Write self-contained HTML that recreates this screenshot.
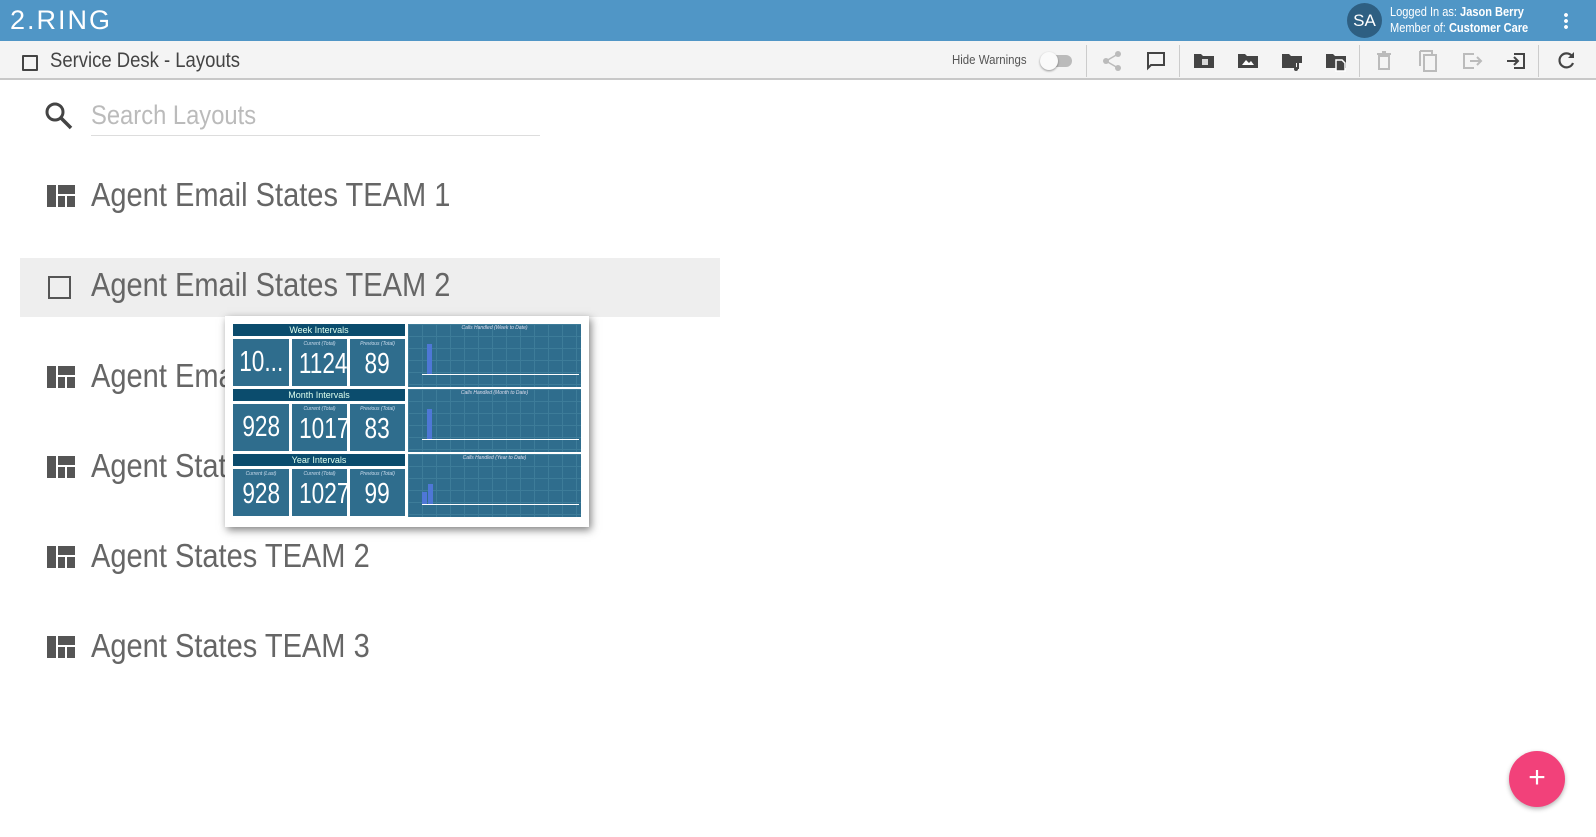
<!DOCTYPE html>
<html><head><meta charset="utf-8"><style>
*{margin:0;padding:0;box-sizing:border-box}
body{width:1596px;height:837px;overflow:hidden;background:#fff;font-family:"Liberation Sans",sans-serif;position:relative}
.n{display:inline-block;transform:scaleX(.88);transform-origin:0 0;white-space:nowrap}
.hdr{position:absolute;left:0;top:0;width:1596px;height:41px;background:#5096c6}
.logo{position:absolute;left:10px;top:5px;color:#fff;font-size:27px;letter-spacing:2px;font-weight:300}
.av{position:absolute;left:1347px;top:3px;width:35px;height:35px;border-radius:50%;background:#2e5f82;color:#fff;font-size:17px;text-align:center;line-height:35px}
.usr{position:absolute;left:1390px;top:4px;color:#fff;font-size:13px;line-height:16px}
.tb{position:absolute;left:0;top:41px;width:1596px;height:39px;background:#f4f4f4;border-bottom:2px solid #c8c8c8}
.abs{position:absolute}
.row{position:absolute;left:91px;font-size:33px;color:#666}
.ico{position:absolute;left:47px;width:28px;height:22px}
.pop{position:absolute;left:225px;top:316px;width:364px;height:211px;background:#fff;box-shadow:2px 3px 8px rgba(0,0,0,.5)}
.h{position:absolute;background:#0b4c6d;color:#dfe;font-size:9px;text-align:center;line-height:12px}
.t{position:absolute;background:#2f6d8d;color:#fff;text-align:center;font-size:29px;line-height:30px;overflow:hidden}
.t em{display:inline-block;transform:scaleX(.78);font-style:normal}
.t small{display:block;font-size:5px;line-height:10px;color:#cde;font-style:italic}
.c{position:absolute;background:#2f6d8d;left:183px;width:173px;height:63px;background-image:linear-gradient(#3d7c99 1px,transparent 1px),linear-gradient(90deg,#3d7c99 1px,transparent 1px);background-size:14px 12px}
.c span{position:absolute;top:1px;width:100%;text-align:center;font-size:5px;color:#dde;font-style:italic}
.c b{position:absolute;background:#4e77d6;width:5px}
.c i{position:absolute;left:14px;right:2px;bottom:12px;height:1px;background:#fff}
</style></head><body>
<div class="hdr"><div class="logo">2.RING</div>
<div class="av">SA</div>
<div class="usr"><span class="n" style="transform:scaleX(.85)">Logged In as: <b>Jason Berry</b><br>Member of: <b>Customer Care</b></span></div>
<div class="abs" style="left:1564px;top:12px;width:4px;height:18px;background:radial-gradient(circle,#fff 1.8px,transparent 2px) 0 0/4px 6px"></div>
</div>
<div class="tb">
<div class="abs" style="left:22px;top:14px;width:16px;height:16px;border:2px solid #444;border-radius:1px"></div>
<div class="abs" style="left:50px;top:8px;font-size:21px;color:#444"><span class="n">Service Desk - Layouts</span></div>
<div class="abs" style="left:952px;top:11px;font-size:13px;color:#555"><span class="n">Hide Warnings</span></div>
<div class="abs" style="left:1042px;top:14px;width:30px;height:12px;border-radius:6px;background:#bbb"></div>
<div class="abs" style="left:1040px;top:11px;width:18px;height:18px;border-radius:50%;background:#fafafa;box-shadow:0 1px 2px rgba(0,0,0,.4)"></div>
<div class="abs" style="left:1086px;top:4px;width:1px;height:32px;background:#ccc"></div>
<div class="abs" style="left:1179px;top:4px;width:1px;height:32px;background:#ccc"></div>
<div class="abs" style="left:1359px;top:4px;width:1px;height:32px;background:#ccc"></div>
<div class="abs" style="left:1538px;top:4px;width:1px;height:32px;background:#ccc"></div>
<svg class="abs" style="left:1100px;top:8px" width="24" height="24" viewBox="0 0 24 24" fill="#bbb"><circle cx="18" cy="5" r="3"/><circle cx="6" cy="12" r="3"/><circle cx="18" cy="19" r="3"/><path d="M6 12L18 5M6 12l12 7" stroke="#bbb" stroke-width="1.5"/></svg>
<svg class="abs" style="left:1144px;top:8px" width="24" height="24" viewBox="0 0 24 24"><path d="M4 4h16v12H7l-3 3z" fill="none" stroke="#444" stroke-width="2"/></svg>
<svg class="abs" style="left:1192px;top:8px" width="24" height="24" viewBox="0 0 24 24"><path d="M2 5h7l2 2h11v12H2z" fill="#444"/><path d="M10 10h6v6h-6z" fill="#fff" opacity=".8"/></svg>
<svg class="abs" style="left:1236px;top:8px" width="24" height="24" viewBox="0 0 24 24"><path d="M2 5h7l2 2h11v12H2z" fill="#444"/><path d="M6 16l4-5 3 3 2-2 3 4z" fill="#fff"/></svg>
<svg class="abs" style="left:1280px;top:8px" width="24" height="24" viewBox="0 0 24 24"><path d="M2 5h7l2 2h11v7h-6v5H2z" fill="#444"/><path d="M18 13v7" stroke="#444" stroke-width="2"/><circle cx="16" cy="20" r="2" fill="#444"/></svg>
<svg class="abs" style="left:1324px;top:8px" width="24" height="24" viewBox="0 0 24 24"><path d="M2 5h7l2 2h11v12H2z" fill="#444"/><path d="M12 11h6l3 3v8h-9z" fill="#444" stroke="#fff" stroke-width="1.5"/></svg>
<svg class="abs" style="left:1372px;top:8px" width="24" height="24" viewBox="0 0 24 24"><path d="M7 7h10v13H7zM5 5h14M10 3h4" fill="none" stroke="#bbb" stroke-width="2"/></svg>
<svg class="abs" style="left:1416px;top:8px" width="24" height="24" viewBox="0 0 24 24"><path d="M8 6h12v16H8zM4 2h12v3" fill="none" stroke="#bbb" stroke-width="2"/><path d="M4 2v15" stroke="#bbb" stroke-width="2"/></svg>
<svg class="abs" style="left:1460px;top:8px" width="24" height="24" viewBox="0 0 24 24"><path d="M14 5H4v14h10M10 12h11M17 8l4 4-4 4" fill="none" stroke="#bbb" stroke-width="2"/></svg>
<svg class="abs" style="left:1504px;top:8px" width="24" height="24" viewBox="0 0 24 24"><path d="M10 5h10v14H10M3 12h11M10 8l4 4-4 4" fill="none" stroke="#444" stroke-width="2"/></svg>
<svg class="abs" style="left:1554px;top:8px" width="24" height="24" viewBox="0 0 24 24"><path d="M18 7a7 7 0 1 0 1 7" fill="none" stroke="#444" stroke-width="2.2"/><path d="M20 3v6h-6z" fill="#444"/></svg>
</div>

<svg class="abs" style="left:43px;top:100px" width="32" height="32" viewBox="0 0 32 32"><circle cx="12" cy="12" r="8" fill="none" stroke="#444" stroke-width="3"/><path d="M18 18l10 10" stroke="#444" stroke-width="3.5"/></svg>
<div class="abs" style="left:91px;top:100px;font-size:27px;color:#bbb"><span class="n">Search Layouts</span></div>
<div class="abs" style="left:91px;top:135px;width:449px;height:1px;background:#ddd"></div>

<div class="abs" style="left:20px;top:258px;width:700px;height:59px;background:#eee"></div>
<div class="abs" style="left:48px;top:276px;width:23px;height:23px;border:2px solid #555"></div>

<svg width="0" height="0" style="position:absolute"><symbol id="q" viewBox="0 0 28 22"><path d="M0 0h9v22H0zM11 0h17v9H11zM11 11h7v11h-7zM20 11h8v11h-8z" fill="#555"/></symbol></svg>
<svg class="ico" style="top:185px"><use href="#q"/></svg>
<svg class="ico" style="top:366px"><use href="#q"/></svg>
<svg class="ico" style="top:456px"><use href="#q"/></svg>
<svg class="ico" style="top:546px"><use href="#q"/></svg>
<svg class="ico" style="top:636px"><use href="#q"/></svg>

<div class="row" style="top:176px"><span class="n">Agent Email States TEAM 1</span></div>
<div class="row" style="top:266px"><span class="n">Agent Email States TEAM 2</span></div>
<div class="row" style="top:357px"><span class="n">Agent Email States TEAM 3</span></div>
<div class="row" style="top:447px"><span class="n">Agent States TEAM 1</span></div>
<div class="row" style="top:537px"><span class="n">Agent States TEAM 2</span></div>
<div class="row" style="top:627px"><span class="n">Agent States TEAM 3</span></div>

<div class="pop">
<div class="h" style="left:8px;top:8px;width:172px">Week Intervals</div>
<div class="t" style="left:8px;top:23px;width:56px;height:47px;padding-top:8px"><em>10...</em></div>
<div class="t" style="left:67px;top:23px;width:55px;height:47px"><small>Current (Total)</small><em>1124</em></div>
<div class="t" style="left:125px;top:23px;width:55px;height:47px"><small>Previous (Total)</small><em>89</em></div>
<div class="c" style="top:8px"><span>Calls Handled (Week to Date)</span><i></i><b style="left:19px;height:30px;bottom:13px"></b></div>
<div class="h" style="left:8px;top:73px;width:172px">Month Intervals</div>
<div class="t" style="left:8px;top:88px;width:56px;height:47px;padding-top:8px"><em>928</em></div>
<div class="t" style="left:67px;top:88px;width:55px;height:47px"><small>Current (Total)</small><em>1017</em></div>
<div class="t" style="left:125px;top:88px;width:55px;height:47px"><small>Previous (Total)</small><em>83</em></div>
<div class="c" style="top:73px"><span>Calls Handled (Month to Date)</span><i></i><b style="left:19px;height:30px;bottom:13px"></b></div>
<div class="h" style="left:8px;top:138px;width:172px">Year Intervals</div>
<div class="t" style="left:8px;top:153px;width:56px;height:47px"><small>Current (Last)</small><em>928</em></div>
<div class="t" style="left:67px;top:153px;width:55px;height:47px"><small>Current (Total)</small><em>1027</em></div>
<div class="t" style="left:125px;top:153px;width:55px;height:47px"><small>Previous (Total)</small><em>99</em></div>
<div class="c" style="top:138px"><span>Calls Handled (Year to Date)</span><i></i><b style="left:14px;height:12px;bottom:13px"></b><b style="left:20px;height:20px;bottom:13px"></b></div>
</div>

<div class="abs" style="left:1509px;top:751px;width:56px;height:56px;border-radius:50%;background:#f2417a;box-shadow:0 2px 5px rgba(0,0,0,.3);color:#fff;font-size:30px;text-align:center;line-height:54px">+</div>
</body></html>
